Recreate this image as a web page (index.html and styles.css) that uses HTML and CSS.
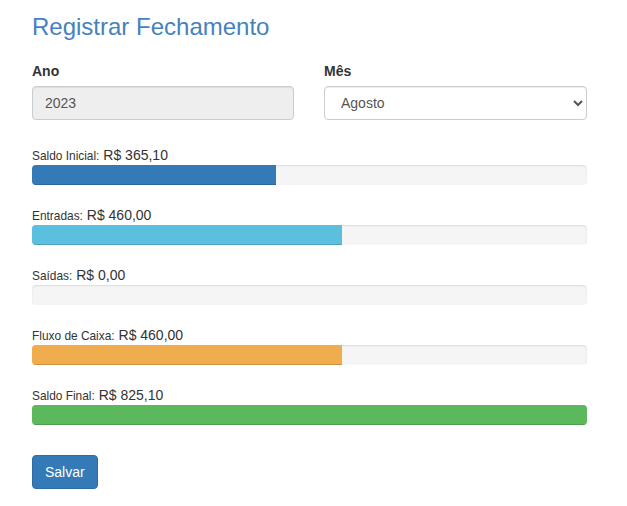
FILE: index.html
```html
<!DOCTYPE html>
<html lang="pt-BR">
<head>
<meta charset="utf-8">
<title>Registrar Fechamento</title>
<link rel="stylesheet" href="styles.css">
</head>
<body>
<div class="container">
  <h3 class="title">Registrar Fechamento</h3>
  <form class="form">
    <div class="row">
      <div class="form-group">
        <label class="label" for="ano">Ano</label>
        <input class="control" id="ano" type="text" value="2023" disabled>
      </div>
      <div class="form-group">
        <label class="label" for="mes">Mês</label>
        <select class="control" id="mes">
          <option>Janeiro</option>
          <option>Fevereiro</option>
          <option>Março</option>
          <option>Abril</option>
          <option>Maio</option>
          <option>Junho</option>
          <option>Julho</option>
          <option selected>Agosto</option>
          <option>Setembro</option>
          <option>Outubro</option>
          <option>Novembro</option>
          <option>Dezembro</option>
        </select>
      </div>
    </div>

    <div class="stats">
      <div class="stat">
        <div class="stat-label"><small>Saldo Inicial:</small> R$ 365,10</div>
        <div class="progress"><div class="progress-bar bar-primary" style="width: 44%"></div></div>
      </div>
      <div class="stat">
        <div class="stat-label"><small>Entradas:</small> R$ 460,00</div>
        <div class="progress"><div class="progress-bar bar-info" style="width: 55.8%"></div></div>
      </div>
      <div class="stat">
        <div class="stat-label"><small>Saídas:</small> R$ 0,00</div>
        <div class="progress"><div class="progress-bar bar-danger" style="width: 0%"></div></div>
      </div>
      <div class="stat">
        <div class="stat-label"><small>Fluxo de Caixa:</small> R$ 460,00</div>
        <div class="progress"><div class="progress-bar bar-warning" style="width: 55.8%"></div></div>
      </div>
      <div class="stat">
        <div class="stat-label"><small>Saldo Final:</small> R$ 825,10</div>
        <div class="progress"><div class="progress-bar bar-success" style="width: 100%"></div></div>
      </div>
    </div>

    <div class="actions">
      <button type="button" class="btn">Salvar</button>
    </div>
  </form>
</div>
</body>
</html>
```

FILE: styles.css
```css
* {
  box-sizing: border-box;
}

html, body {
  margin: 0;
  padding: 0;
  background: #fff;
}

body {
  font-family: "Liberation Sans", Arial, Helvetica, sans-serif;
  font-size: 14px;
  line-height: 1.42857143;
  color: #333;
}

.container {
  width: 555px;
  margin-left: 32px;
  padding-top: 14px;
}

.title {
  margin: 0 0 21px 0;
  font-size: 24px;
  font-weight: 400;
  line-height: 1.1;
  color: #4582be;
}

.row {
  display: grid;
  grid-template-columns: 262px 262px;
  column-gap: 30px;
}

.form-group {
  margin-bottom: 25px;
}

.label {
  display: block;
  font-weight: 700;
  margin-bottom: 5px;
}

.control {
  display: block;
  width: 100%;
  height: 34px;
  padding: 6px 12px;
  font-family: inherit;
  font-size: 14px;
  line-height: 1.42857143;
  color: #555;
  background-color: #fff;
  border: 1px solid #ccc;
  border-radius: 4px;
  box-shadow: inset 0 1px 1px rgba(0, 0, 0, 0.075);
}

input.control[disabled] {
  background-color: #eee;
  opacity: 1;
  color: #555;
}

select.control {
  width: 263px;
  padding: 6px 8px 6px 12px;
}

.stat-label small {
  font-size: 85%;
}

.progress {
  height: 20px;
  margin-bottom: 20px;
  overflow: hidden;
  background-color: #f5f5f5;
  border-radius: 4px;
  box-shadow: inset 0 1px 2px rgba(0, 0, 0, 0.1);
}

.progress-bar {
  height: 100%;
  box-shadow: inset 0 -1px 0 rgba(0, 0, 0, 0.15);
}

.bar-primary { background-color: #337ab7; }
.bar-info { background-color: #5bc0de; }
.bar-danger { background-color: #d9534f; }
.bar-warning { background-color: #f0ad4e; }
.bar-success { background-color: #5cb85c; }

.actions {
  padding-top: 10px;
}

.btn {
  display: inline-block;
  height: 34px;
  padding: 6px 12px;
  font-family: inherit;
  font-size: 14px;
  line-height: 1.42857143;
  color: #fff;
  background-color: #337ab7;
  border: 1px solid #2e6da4;
  border-radius: 4px;
  cursor: pointer;
}
```
